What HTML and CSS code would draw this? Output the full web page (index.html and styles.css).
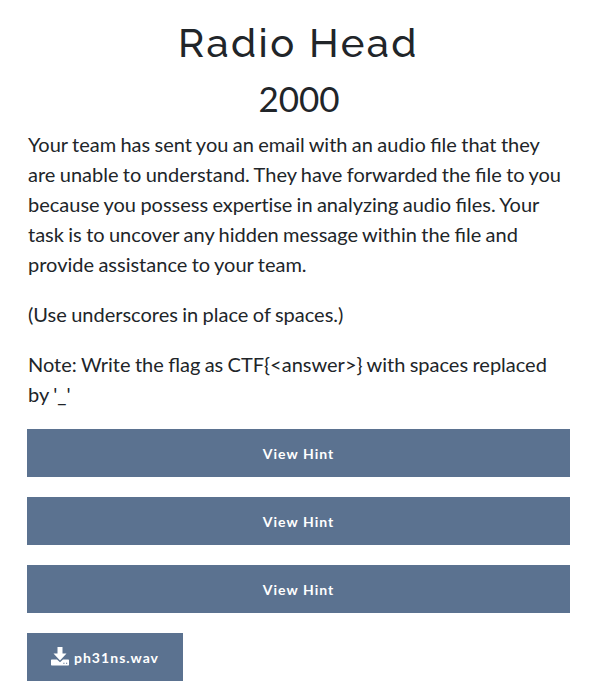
FILE: index.html
```html
<!DOCTYPE html>
<html lang="en">
<head>
<meta charset="utf-8">
<title>Radio Head</title>
<link rel="stylesheet" href="styles.css">
</head>
<body>
<main class="challenge">
  <h2 class="name">Radio Head</h2>
  <h3 class="value">2000</h3>
  <div class="description">
    <p>Your team has sent you an email with an audio file that they are unable to understand. They have forwarded the file to you because you possess <span class="plain">expertise</span> in analyzing audio files. Your task is to uncover any hidden message within the file and provide assistance to your team.</p>
    <p>(Use underscores in place of spaces.)</p>
    <p>Note: Write the flag as CTF{&lt;answer&gt;} with spaces replaced by '_'</p>
  </div>
  <div class="hints">
    <a class="btn">View Hint</a>
    <a class="btn">View Hint</a>
    <a class="btn">View Hint</a>
  </div>
  <a class="btn file"><svg class="icon" viewBox="0 0 18 19" aria-hidden="true"><path fill="currentColor" d="M6.500 0h5v6.500h4L9 13.500 2.500 6.500h4zM.7 12.500h5.300L9 15.300 12 12.500h5.300q.7 0 .7.700v4.600q0 .7-.7.700H.7q-.7 0-.7-.7v-4.600q0-.7.7-.7z"/><path fill="#5b7290" d="M12.300 15.700h1.200v1h-1.200zM15 15.700h1.200v1H15z"/></svg><span>ph31ns.wav</span></a>
</main>
</body>
</html>
```
FILE: styles.css
```css
* { box-sizing: border-box; }
body {
  margin: 0;
  background: #fff;
  color: #212529;
  font: 20px/30px Lato, sans-serif;
}
.challenge { padding: 19px 23px 0 27px; }
.name, .value { margin: 0; text-align: center; font-weight: 400; }
.name {
  margin-bottom: 10px;
  font-family: Raleway, sans-serif;
  font-size: 40px;
  font-weight: 500;
  line-height: 48px;
  letter-spacing: 2.4px;
}
.value { margin-bottom: 10px; padding-left: 1px; font-size: 35px; line-height: 42px; }
.description { padding-left: 1px; word-spacing: -0.75px; }
.description p { margin: 0 0 20px; }
.plain { font-variant-ligatures: none; letter-spacing: -0.1px; }
.hints { display: flex; flex-direction: column; gap: 20px; margin-bottom: 20px; }
.btn {
  display: flex;
  align-items: center;
  justify-content: center;
  height: 48px;
  padding-top: 1px;
  background: #5b7290;
  color: #fff;
  font-size: 14px;
  font-weight: 700;
  letter-spacing: 1.05px;
}
.file { width: 156px; gap: 5px; }
.icon { width: 18px; height: 19px; margin-top: -2px; }
```
